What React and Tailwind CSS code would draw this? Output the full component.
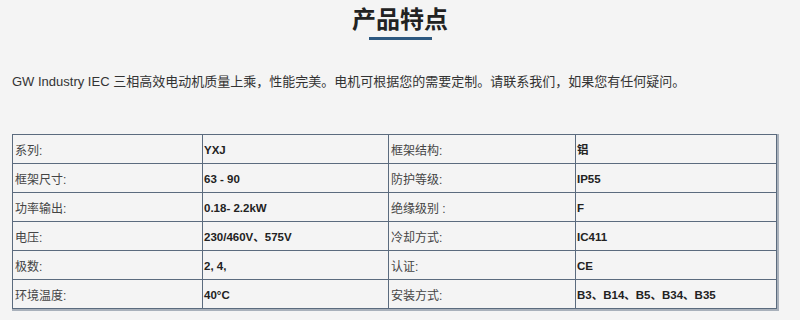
import React from "react";

const rows = [
  ["系列:", "YXJ", "框架结构:", "铝"],
  ["框架尺寸:", "63 - 90", "防护等级:", "IP55"],
  ["功率输出:", "0.18- 2.2kW", "绝缘级别 :", "F"],
  ["电压:", "230/460V、575V", "冷却方式:", "IC411"],
  ["极数:", "2, 4,", "认证:", "CE"],
  ["环境温度:", "40°C", "安装方式:", "B3、B14、B5、B34、B35"],
];

export default function App() {
  return (
    <div
      className="w-[800px] h-[320px] bg-[#f4f4f4] overflow-hidden text-[#333]"
      style={{ fontFamily: '"Liberation Sans", "Noto Sans CJK SC", sans-serif' }}
    >
      <div className="flex flex-col items-center pt-[5px]">
        <h2 className="text-[24px] leading-[30px] font-bold text-[#222]">产品特点</h2>
        <div className="mt-[2px] w-[63px] h-[3px] bg-[#2c5880]" />
      </div>
      <p className="mt-[33px] ml-[12px] text-[13px] leading-[18px] text-[#333]">
        GW Industry IEC 三相高效电动机质量上乘，性能完美。电机可根据您的需要定制。请联系我们，如果您有任何疑问。
      </p>
      <div className="mt-[43px] ml-[12px] w-[767px] border-r-2 border-b-2 border-[#a9b1bb]">
        <table className="w-[765px] border-collapse text-[12px]">
          <colgroup>
            <col className="w-[190px]" />
            <col className="w-[186px]" />
            <col className="w-[187px]" />
            <col />
          </colgroup>
          <tbody>
            {rows.map((r, i) => (
              <tr key={i} className="h-[29px]">
                <td className="border border-[#5b6b7e] px-[2px] pt-[4px] text-[#444]">{r[0]}</td>
                <td className="border border-[#5b6b7e] px-[1px] pt-[4px] text-[11.5px] font-bold text-[#222]">{r[1]}</td>
                <td className="border border-[#5b6b7e] px-[2px] pt-[4px] text-[#444]">{r[2]}</td>
                <td className="border border-[#5b6b7e] px-[1px] pt-[4px] text-[11.5px] font-bold text-[#222]">{r[3]}</td>
              </tr>
            ))}
          </tbody>
        </table>
      </div>
    </div>
  );
}
